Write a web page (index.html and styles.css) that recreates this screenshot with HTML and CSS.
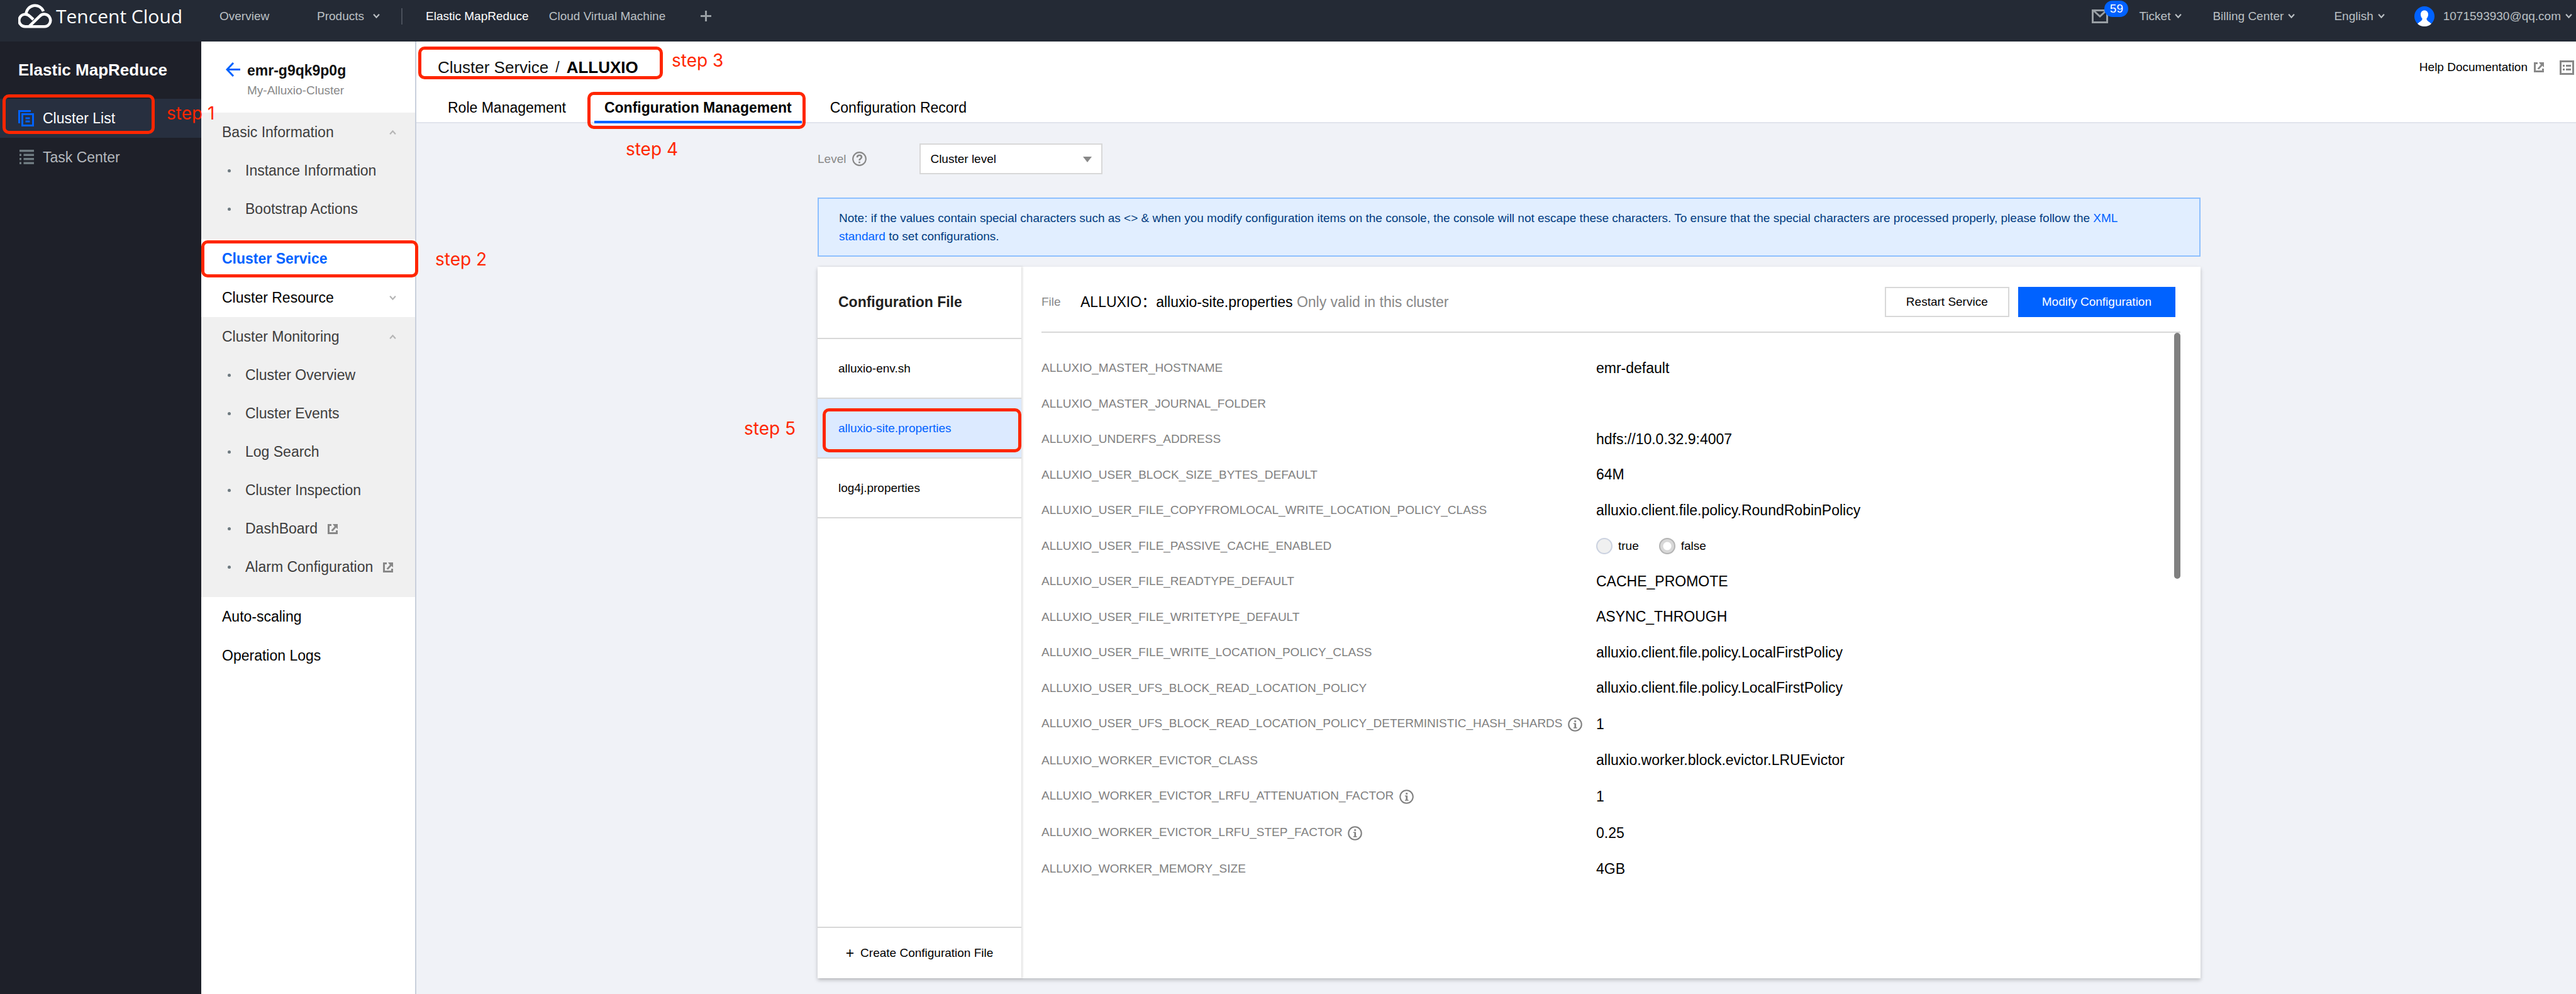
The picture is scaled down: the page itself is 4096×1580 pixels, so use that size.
FILE: index.html
```html
<!DOCTYPE html>
<html lang="en">
    <head>
        <meta charset="UTF-8" />
        <title>Elastic MapReduce - Tencent Cloud</title>
        <link rel="stylesheet" href="styles.css">
    </head>

    <body>
        <!-- shared icons -->
        <svg class="sprite" aria-hidden="true">
            <symbol id="down" viewBox="0 0 10 8">
                <path d="M1 1.5l4 4.5 4-4.5" fill="none" stroke="currentColor" stroke-width="2" />
            </symbol>
            <symbol id="up" viewBox="0 0 10 8">
                <path d="M1 6.500l4-4.500 4 4.500" fill="none" stroke="currentColor" stroke-width="2" />
            </symbol>
            <symbol id="external" viewBox="0 0 16 16">
                <path d="M6 1.500H1.500v13h13V10" fill="none" stroke="currentColor" stroke-width="3" />
                <path d="M8 0h8v8l-2.500-2.500L8 11.500 5.500 10l5.500-6z" fill="currentColor" />
            </symbol>
            <symbol id="info" viewBox="0 0 22 22">
                <circle cx="11" cy="11" r="9.800" fill="none" stroke="currentColor" stroke-width="2" />
                <path d="M9.800 5h2.800v2.500H9.800zM8.500 9h4v6.500H14v1.500H8.500v-1.500h1.500v-5H8.500z" fill="currentColor" />
            </symbol>
        </svg>

        <header class="topbar">
            <a class="logo" href="#">
                <svg width="54" height="39" viewBox="0 0 54 39" fill="none" stroke="#fff" stroke-width="4.500">
                    <path d="M12.500 17A14.200 14.200 0 0 1 40 12" />
                    <path d="M24 25l-5.500-5A9.800 9.800 0 1 0 12.500 36.200H41A9.800 9.800 0 1 0 34 20L17.500 35.800" />
                </svg>
                <span>Tencent Cloud</span>
            </a>
            <nav class="topnav">
                <a class="overview" href="#">Overview</a>
                <a class="products" href="#">Products <svg class="chev"><use href="#down" /></svg></a>
                <span class="sep"></span>
                <a class="current" href="#">Elastic MapReduce</a>
                <a href="#">Cloud Virtual Machine</a>
                <button class="add" type="button" aria-label="Add">
                    <svg width="17" height="17" viewBox="0 0 17 17"><path d="M8.500 0v17M0 8.500h17" stroke="currentColor" stroke-width="3" /></svg>
                </button>
            </nav>
            <nav class="account">
                <a class="mail" href="#" aria-label="Messages">
                    <svg width="26" height="22" viewBox="0 0 26 22" fill="none" stroke="currentColor" stroke-width="3">
                        <path d="M1.500 1.500h23v19h-23zM3 2l10 9 10-9" />
                    </svg>
                    <span class="badge">59</span>
                </a>
                <a class="ticket" href="#">Ticket <svg class="chev"><use href="#down" /></svg></a>
                <a class="billing" href="#">Billing Center <svg class="chev"><use href="#down" /></svg></a>
                <a class="lang" href="#">English <svg class="chev"><use href="#down" /></svg></a>
                <a class="user" href="#">
                    <svg width="32" height="32" viewBox="0 0 32 32">
                        <circle cx="16" cy="16" r="16" fill="#0062ff" />
                        <path d="M16 6.500c-3.500 0-6 2.500-6 6.500 0 3 1.200 5 2.500 6.500.5 3-3 4.500-7.500 8.200A16 16 0 0 0 27 27.700c-4.500-3.700-8-5.200-7.500-8.200C20.800 18 22 16 22 13c0-4-2.500-6.500-6-6.500z" fill="#fff" />
                    </svg>
                    1071593930@qq.com <svg class="chev"><use href="#down" /></svg>
                </a>
            </nav>
        </header>

        <div class="layout">
            <aside class="sidebar">
                <h2>Elastic MapReduce</h2>
                <a class="side-item active" href="#">
                    <svg width="25" height="26" viewBox="0 0 25 26">
                        <path d="M1.500 21V1.500H20M6.500 6.500h17v18h-17z" fill="none" stroke="#0062ff" stroke-width="3" />
                        <path d="M11.500 11.500h7v3h-7zM11.500 16.500h7v3h-7z" fill="#0062ff" />
                    </svg>
                    Cluster List
                    <span class="mark mark-1"></span>
                    <span class="step step-1">step 1</span>
                </a>
                <a class="side-item" href="#">
                    <svg width="25" height="24" viewBox="0 0 25 24" fill="#6e7a80">
                        <path d="M2 0h23v3.500H2zM2 6.500h3V10H2zM8.500 6.500H25V10H8.500zM2 13h3v3.500H2zM8.500 13H25v3.500H8.500zM2 19.500h3V23H2zM8.500 19.500H25V23H8.500z" />
                    </svg>
                    Task Center
                </a>
            </aside>

            <nav class="subnav">
                <div class="cluster">
                    <a href="#" aria-label="Back">
                        <svg width="23" height="23" viewBox="0 0 23 23" fill="none" stroke="#0062ff" stroke-width="3">
                            <path d="M12 1L2 11.500 12 22M2 11.500h21" />
                        </svg>
                    </a>
                    <div>
                        <h3>emr-g9qk9p0g</h3>
                        <p>My-Alluxio-Cluster</p>
                    </div>
                </div>
                <div class="group">
                    <a class="group-title" href="#">Basic Information <svg class="chev"><use href="#up" /></svg></a>
                    <ul>
                        <li><a href="#">Instance Information</a></li>
                        <li><a href="#">Bootstrap Actions</a></li>
                    </ul>
                </div>
                <a class="nav-item active" href="#">
                    Cluster Service
                    <span class="mark mark-2"></span>
                    <span class="step step-2">step 2</span>
                </a>
                <a class="nav-item" href="#">Cluster Resource <svg class="chev"><use href="#down" /></svg></a>
                <div class="group">
                    <a class="group-title" href="#">Cluster Monitoring <svg class="chev"><use href="#up" /></svg></a>
                    <ul>
                        <li><a href="#">Cluster Overview</a></li>
                        <li><a href="#">Cluster Events</a></li>
                        <li><a href="#">Log Search</a></li>
                        <li><a href="#">Cluster Inspection</a></li>
                        <li><a href="#">DashBoard <svg class="ext"><use href="#external" /></svg></a></li>
                        <li><a href="#">Alarm Configuration <svg class="ext"><use href="#external" /></svg></a></li>
                    </ul>
                </div>
                <a class="nav-item" href="#">Auto-scaling</a>
                <a class="nav-item" href="#">Operation Logs</a>
            </nav>

            <main>
                <div class="page-head">
                    <div class="title-row">
                        <h1>
                            <a href="#">Cluster Service</a>
                            <span class="slash">/</span>
                            <b>ALLUXIO</b>
                            <span class="mark mark-3"></span>
                            <span class="step step-3">step 3</span>
                        </h1>
                        <a class="help" href="#">Help Documentation <svg class="ext"><use href="#external" /></svg></a>
                        <button class="doc" type="button" aria-label="Document list">
                            <svg width="23" height="23" viewBox="0 0 23 23">
                                <path d="M1.500 1.500h20v20h-20z" fill="none" stroke="#888" stroke-width="3" />
                                <path d="M5 7h3v3H5zM10 7h8v3h-8zM5 13h3v3H5zM10 13h8v3h-8z" fill="#888" />
                            </svg>
                        </button>
                    </div>
                    <nav class="tabs">
                        <a href="#">Role Management</a>
                        <a class="active" href="#">
                            Configuration Management
                            <span class="mark mark-4"></span>
                            <span class="step step-4">step 4</span>
                        </a>
                        <a href="#">Configuration Record</a>
                    </nav>
                </div>

                <div class="content">
                    <div class="inner">
                        <div class="level">
                            <label for="level">Level</label>
                            <svg width="23" height="23" viewBox="0 0 23 23" fill="none" stroke="#888">
                                <circle cx="11.500" cy="11.500" r="10.300" stroke-width="2.200" />
                                <path d="M8 9.200c0-2.200 1.500-3.400 3.500-3.400s3.500 1.200 3.500 3c0 2.500-3.500 2.500-3.500 5.200M11.500 15.800v2.400" stroke-width="2.600" />
                            </svg>
                            <div class="select">
                                <select id="level">
                                    <option>Cluster level</option>
                                </select>
                                <svg width="14" height="9" viewBox="0 0 14 9"><path d="M0 0h14L7 9z" fill="#888" /></svg>
                            </div>
                        </div>

                        <p class="note">
                            Note: if the values contain special characters such as &lt;&gt; &amp; when you modify configuration items on the console, the console will not escape these characters. To ensure that the special characters are processed properly, please follow the <a href="#">XML standard</a> to set configurations.
                        </p>

                        <section class="card">
                            <div class="files">
                                <h3>Configuration File</h3>
                                <a href="#">alluxio-env.sh</a>
                                <a class="active" href="#">
                                    alluxio-site.properties
                                    <span class="mark mark-5"></span>
                                    <span class="step step-5">step 5</span>
                                </a>
                                <a href="#">log4j.properties</a>
                                <button class="create" type="button"><span>+</span> Create Configuration File</button>
                            </div>

                            <div class="detail">
                                <div class="toolbar">
                                    <span class="file-label">File</span>
                                    <p class="file-name">ALLUXIO：alluxio-site.properties <span>Only valid in this cluster</span></p>
                                    <button class="btn" type="button">Restart Service</button>
                                    <button class="btn btn-primary" type="button">Modify Configuration</button>
                                </div>
                                <div class="params">
                                    <table>
                                        <tr><th scope="row">ALLUXIO_MASTER_HOSTNAME</th><td>emr-default</td></tr>
                                        <tr><th scope="row">ALLUXIO_MASTER_JOURNAL_FOLDER</th><td></td></tr>
                                        <tr><th scope="row">ALLUXIO_UNDERFS_ADDRESS</th><td>hdfs://10.0.32.9:4007</td></tr>
                                        <tr><th scope="row">ALLUXIO_USER_BLOCK_SIZE_BYTES_DEFAULT</th><td>64M</td></tr>
                                        <tr><th scope="row">ALLUXIO_USER_FILE_COPYFROMLOCAL_WRITE_LOCATION_POLICY_CLASS</th><td>alluxio.client.file.policy.RoundRobinPolicy</td></tr>
                                        <tr>
                                            <th scope="row">ALLUXIO_USER_FILE_PASSIVE_CACHE_ENABLED</th>
                                            <td>
                                                <div class="radios">
                                                    <label><input type="radio" name="passive" disabled />true</label>
                                                    <label><input type="radio" name="passive" disabled checked />false</label>
                                                </div>
                                            </td>
                                        </tr>
                                        <tr><th scope="row">ALLUXIO_USER_FILE_READTYPE_DEFAULT</th><td>CACHE_PROMOTE</td></tr>
                                        <tr><th scope="row">ALLUXIO_USER_FILE_WRITETYPE_DEFAULT</th><td>ASYNC_THROUGH</td></tr>
                                        <tr><th scope="row">ALLUXIO_USER_FILE_WRITE_LOCATION_POLICY_CLASS</th><td>alluxio.client.file.policy.LocalFirstPolicy</td></tr>
                                        <tr><th scope="row">ALLUXIO_USER_UFS_BLOCK_READ_LOCATION_POLICY</th><td>alluxio.client.file.policy.LocalFirstPolicy</td></tr>
                                        <tr class="tall"><th scope="row">ALLUXIO_USER_UFS_BLOCK_READ_LOCATION_POLICY_DETERMINISTIC_HASH_SHARDS <svg class="info"><use href="#info" /></svg></th><td>1</td></tr>
                                        <tr><th scope="row">ALLUXIO_WORKER_EVICTOR_CLASS</th><td>alluxio.worker.block.evictor.LRUEvictor</td></tr>
                                        <tr class="tall"><th scope="row">ALLUXIO_WORKER_EVICTOR_LRFU_ATTENUATION_FACTOR <svg class="info"><use href="#info" /></svg></th><td>1</td></tr>
                                        <tr class="tall"><th scope="row">ALLUXIO_WORKER_EVICTOR_LRFU_STEP_FACTOR <svg class="info"><use href="#info" /></svg></th><td>0.25</td></tr>
                                        <tr><th scope="row">ALLUXIO_WORKER_MEMORY_SIZE</th><td>4GB</td></tr>
                                    </table>
                                    <div class="scroll-thumb"></div>
                                </div>
                            </div>
                        </section>
                    </div>
                </div>
            </main>
        </div>
    </body>
</html>
```

FILE: styles.css
```css
* {
    box-sizing: border-box;
}

body {
    display: flex;
    flex-direction: column;
    min-height: 100vh;
    margin: 0;
    font-family: "Liberation Sans", Arial, "Noto Sans CJK SC", sans-serif;
    font-size: 19px;
    color: #000;
    background-color: #f0f2f7;
}

h1,
h2,
h3,
p,
ul {
    margin: 0;
    padding: 0;
}

a {
    color: inherit;
    text-decoration: none;
}

button,
select {
    font: inherit;
    color: inherit;
    border: none;
    border-radius: 0;
    background: none;
    cursor: pointer;
}

svg {
    display: block;
    flex: none;
}

.sprite {
    position: absolute;
    width: 0;
    height: 0;
}

.chev {
    width: 11px;
    height: 9px;
}

.ext {
    width: 16px;
    height: 16px;
    color: #888;
}

/* top bar */
.topbar {
    display: flex;
    align-items: center;
    height: 66px;
    padding: 0 6px 15px 29px;
    color: #bbc0c4;
    background-color: #242a35;
    white-space: nowrap;
}

.topbar a {
    display: flex;
    align-items: center;
}

.topbar .logo {
    gap: 6px;
    width: 320px;
    color: #fff;
    font-family: "Open Sans", "Noto Sans", sans-serif;
    font-size: 30px;
    line-height: 42px;
}

.topnav,
.account {
    display: flex;
    align-items: center;
}

.overview {
    width: 155px;
}

.products {
    gap: 14px;
    width: 134px;
}

.sep {
    width: 2px;
    height: 26px;
    margin-right: 37px;
    background-color: #4a505b;
}

.current {
    margin-right: 32px;
    color: #fff;
}

.add {
    margin-left: 56px;
    padding: 0;
    color: #999fa4;
}

.account {
    margin-left: auto;
}

.account a {
    gap: 7px;
}

.mail {
    position: relative;
    margin-right: 49px;
    color: #999fa4;
}

.badge {
    position: absolute;
    left: 20px;
    top: -14px;
    width: 38px;
    border-radius: 13px;
    color: #fff;
    background-color: #0062ff;
    line-height: 26px;
    text-align: center;
}

.ticket {
    margin-right: 49px;
}

.billing {
    margin-right: 62px;
}

.lang {
    margin-right: 47px;
}

.user svg:first-child {
    margin-right: 7px;
}

.layout {
    display: flex;
    flex: 1;
}

/* product sidebar */
.sidebar {
    flex: none;
    width: 320px;
    color: #b4b8bd;
    background-color: #1e2029;
    font-size: 23px;
}

.sidebar h2 {
    padding-left: 29px;
    color: #fff;
    font-size: 26px;
    line-height: 91px;
}

.side-item {
    position: relative;
    display: flex;
    align-items: center;
    gap: 14px;
    height: 62px;
    padding-left: 29px;
}

.side-item.active {
    color: #fff;
    background-color: #272f3f;
}

/* cluster navigation */
.subnav {
    flex: none;
    width: 342px;
    border-right: 2px solid #c9d0dc;
    background-color: #fff;
    font-size: 23px;
}

.cluster {
    display: flex;
    gap: 11px;
    height: 113px;
    padding: 30px 0 0 39px;
    line-height: 32px;
}

.cluster svg {
    margin-top: 3px;
}

.cluster h3 {
    color: #111;
    font-size: 23px;
}

.cluster p {
    color: #888;
    font-size: 19px;
}

.group {
    padding-bottom: 17px;
    color: #3d3d3d;
    background-color: #f0f0f0;
}

.group-title,
.nav-item {
    position: relative;
    display: flex;
    align-items: center;
    justify-content: space-between;
    height: 62px;
    padding: 0 30px 0 33px;
}

.subnav .chev {
    color: #b5b5b5;
}

.group li {
    height: 61px;
}

.nav-item.active {
    color: #0062ff;
    font-weight: bold;
}

.group ul {
    list-style: none;
}

.group li {
    display: flex;
    align-items: center;
    gap: 23px;
    padding-left: 42px;
}

.group li::before {
    content: "";
    width: 5px;
    height: 5px;
    border-radius: 50%;
    background-color: #6e7a80;
}

.group li a {
    display: flex;
    align-items: center;
    gap: 16px;
}

/* page header */
main {
    display: flex;
    flex: 1;
    flex-direction: column;
    min-width: 0;
}

.page-head {
    padding: 16px 3px 0 34px;
    background-color: #fff;
    box-shadow: inset 0 -2px #e1e4ec;
}

.title-row {
    display: flex;
    align-items: center;
    margin-bottom: 14px;
}

h1 {
    position: relative;
    display: flex;
    align-items: center;
    gap: 11px;
    color: #111;
    font-size: 26px;
    font-weight: normal;
    line-height: 50px;
}

h1 b {
    color: #000;
}

.slash {
    font-size: 23px;
}

.help {
    display: flex;
    align-items: center;
    gap: 10px;
    margin-left: auto;
    margin-right: 25px;
}

.doc {
    padding: 0;
}

.tabs {
    display: flex;
    gap: 29px;
    font-size: 23px;
    line-height: 42px;
}

.tabs a {
    position: relative;
    padding: 4px 16px 0;
    border-bottom: 4px solid transparent;
}

.tabs .active {
    border-color: #0062ff;
    font-weight: bold;
}

/* content */
.content {
    display: flex;
    flex: 1;
    padding: 32px 0 25px 41px;
}

.inner {
    display: flex;
    flex: 1;
    flex-direction: column;
    max-width: 2199px;
    margin: 0 auto;
}

.level {
    display: flex;
    align-items: center;
    gap: 10px;
    margin-bottom: 37px;
    color: #888;
}

.select {
    position: relative;
    width: 291px;
    margin-left: 74px;
    color: #000;
}

.select select {
    width: 100%;
    height: 49px;
    padding: 0 15px;
    border: 2px solid #d8d8d8;
    background-color: #fff;
    appearance: none;
}

.select svg {
    position: absolute;
    right: 17px;
    top: 21px;
    pointer-events: none;
}

.note {
    margin-bottom: 16px;
    padding: 16px 64px 16px 32px;
    border: 2px solid #8ec0ff;
    color: #003b80;
    background-color: #e1eeff;
    line-height: 29px;
}

.note a {
    color: #0062ff;
}

.card {
    display: flex;
    flex: 1;
    background-color: #fff;
    box-shadow: 0 3px 6px rgba(0, 0, 0, 0.22);
}

.files {
    display: flex;
    flex: none;
    flex-direction: column;
    width: 324px;
    box-shadow: 2px 0 3px rgba(0, 0, 0, 0.12);
}

.files h3 {
    padding-left: 33px;
    border-bottom: 2px solid #d8d8d8;
    color: #222;
    font-size: 23px;
    line-height: 113px;
}

.files a {
    position: relative;
    padding-left: 33px;
    border-bottom: 2px solid #d8d8d8;
    line-height: 93px;
}

.files .active {
    color: #0062ff;
    background-color: #dceaff;
}

.create {
    display: flex;
    align-items: center;
    justify-content: center;
    gap: 10px;
    height: 82px;
    margin-top: auto;
    border-top: 2px solid #d8d8d8;
}

.create span {
    font-size: 23px;
}

.detail {
    display: flex;
    flex: 1;
    flex-direction: column;
    padding: 0 32px;
}

.toolbar {
    display: flex;
    align-items: center;
    gap: 14px;
    padding: 32px 8px 23px 0;
    border-bottom: 2px solid #d8d8d8;
}

.file-label {
    width: 48px;
    color: #888;
}

.file-name {
    flex: 1;
    font-size: 23px;
    line-height: 48px;
}

.file-name span {
    color: #888;
}

.btn {
    height: 48px;
    padding: 0 32px;
    border: 2px solid #d8d8d8;
    background-color: #fff;
}

.btn-primary {
    padding: 0 36px;
    border-color: #0062ff;
    color: #fff;
    background-color: #0062ff;
}

.params {
    position: relative;
    flex: 1;
    padding-top: 28px;
}

.params table {
    border-collapse: collapse;
    font-size: 23px;
}

.params tr {
    height: 56px;
}

.params tr:nth-child(even) {
    height: 57px;
}

.params tr.tall {
    height: 58px;
}

.params th,
.params td {
    padding: 0;
    text-align: left;
    vertical-align: middle;
}

.params th {
    width: 882px;
    color: #808080;
    font-size: 19px;
    font-weight: normal;
}

.info {
    display: inline-block;
    width: 23px;
    height: 23px;
    margin-left: 3px;
    vertical-align: middle;
}

.radios {
    display: flex;
    gap: 32px;
    font-size: 19px;
}

.radios label {
    display: flex;
    align-items: center;
    gap: 9px;
}

.radios input {
    width: 26px;
    height: 26px;
    margin: 0;
    border: 2px solid #cbd2e0;
    border-radius: 50%;
    background-color: #f0f0f0;
    appearance: none;
}

.radios input:checked {
    border-color: #b3b3b3;
    background: radial-gradient(circle, #fff 6px, #d8d8d8 7px);
}

.scroll-thumb {
    position: absolute;
    top: 0;
    right: 0;
    width: 10px;
    height: 391px;
    border-radius: 5px;
    background-color: #808080;
}

/* walkthrough marks */
.mark {
    position: absolute;
    z-index: 2;
    border: 5px solid #ff2600;
    border-radius: 10px;
    pointer-events: none;
}

.step {
    position: absolute;
    z-index: 2;
    color: #ff2600;
    font-family: Inter, Roboto, sans-serif;
    font-size: 28px;
    font-weight: 400;
    line-height: 28px;
    white-space: nowrap;
}

.mark-1 {
    left: 4px;
    top: -7px;
    width: 242px;
    height: 63px;
}

.step-1 {
    left: 265px;
    top: 9px;
}

.mark-2 {
    left: 0;
    top: 2px;
    width: 345px;
    height: 59px;
}

.step-2 {
    left: 372px;
    top: 18px;
}

.mark-3 {
    left: -31px;
    top: -8px;
    width: 389px;
    height: 52px;
}

.step-3 {
    left: 372px;
    top: 0;
}

.mark-4 {
    left: -11px;
    top: 0;
    width: 347px;
    height: 59px;
}

.step-4 {
    left: 50px;
    top: 77px;
}

.mark-5 {
    left: 8px;
    top: 15px;
    width: 316px;
    height: 70px;
}

.step-5 {
    left: -117px;
    top: 33px;
}
```
